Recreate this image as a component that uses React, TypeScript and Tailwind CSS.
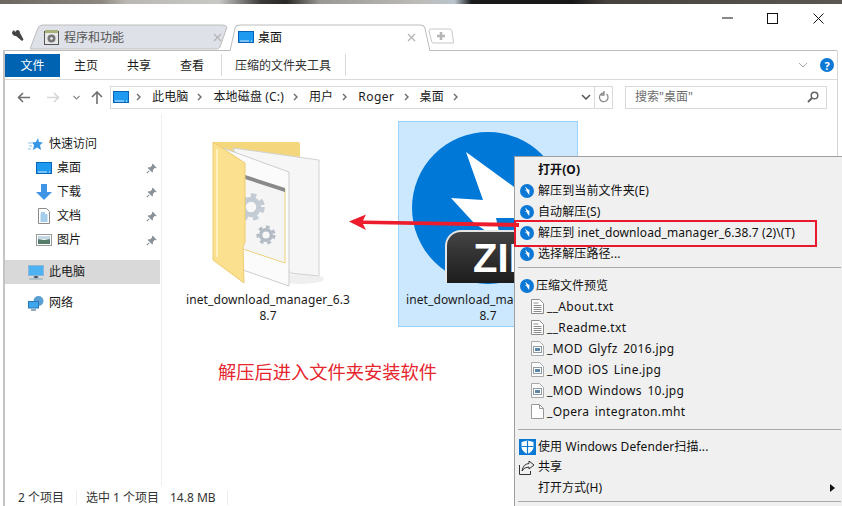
import type { FC, ReactNode } from 'react';

const Chevron: FC = () => (
  <svg width="6" height="8" viewBox="0 0 6 8" className="shrink-0">
    <path d="M1 1l3 3-3 3" fill="none" stroke="#6d6d6d" strokeWidth="1.4" />
  </svg>
);

const DesktopIcon: FC<{ w?: number; h?: number }> = ({ w = 16, h = 12 }) => (
  <svg width={w} height={h} viewBox="0 0 16 12" className="shrink-0">
    <rect x="0.5" y="0.5" width="15" height="11" fill="#1e9bf0" stroke="#0b63b8" />
    <path d="M2 10h9" stroke="#cfe9ff" strokeWidth="1" />
    <path d="M13 10h1" stroke="#ffffff" strokeWidth="1" />
  </svg>
);

const Pin: FC = () => (
  <svg width="11" height="11" viewBox="0 0 11 11" className="shrink-0">
    <path d="M6.5 0.500l4 4-1 .8-.8-.2-1.800 1.800.1 1.800-.8.8-4.500-4.500.8-.8 1.800.1 1.800-1.800-.2-.8z" fill="#8a9199" />
    <path d="M3.200 7.800L.8 10.200" stroke="#8a9199" strokeWidth="1.200" />
  </svg>
);

const ZipBadge: FC = () => (
  <svg width="14" height="14" viewBox="0 0 14 14" className="shrink-0">
    <circle cx="7" cy="7" r="7" fill="#0b78d6" />
    <path d="M5 2.500l3.500 3.200 1 -.2-.3 5.500-2.700-3.700 1-.3L4.500 6.500l2 -.4z" fill="#fff" />
  </svg>
);

const TextFileIcon: FC = () => (
  <svg width="13" height="15" viewBox="0 0 13 15" className="shrink-0">
    <path d="M.5.5h8l4 4v10H.5z" fill="#fff" stroke="#8c8c8c" />
    <path d="M2.500 4h5M2.500 6.500h8M2.500 8.500h8M2.500 10.500h8M2.500 12.500h8" stroke="#8c8c8c" />
  </svg>
);

const ImageFileIcon: FC = () => (
  <svg width="13" height="15" viewBox="0 0 13 15" className="shrink-0">
    <path d="M.5.5h8l4 4v10H.5z" fill="#fbfbfb" stroke="#a9a9a9" />
    <rect x="2.500" y="5.500" width="8" height="6" fill="#fff" stroke="#8f9aa3" />
    <rect x="4" y="7" width="5" height="3" fill="#5c87a8" />
  </svg>
);

const BlankFileIcon: FC = () => (
  <svg width="13" height="15" viewBox="0 0 13 15" className="shrink-0">
    <path d="M.5.5h8l4 4v10H.5z" fill="#fff" stroke="#9a9a9a" />
    <path d="M8.500.5v4h4" fill="none" stroke="#9a9a9a" />
  </svg>
);

const NavRow: FC<{ icon: ReactNode; label: string; pinned?: boolean; active?: boolean; indent?: boolean }> = ({
  icon,
  label,
  pinned,
  active,
  indent,
}) => (
  <div
    className={
      active
        ? 'flex h-[24px] w-[155px] items-center bg-[#d9d9d9] pl-[23px] text-[#1a1a1a]'
        : indent
          ? 'flex h-[24px] w-[155px] items-center pl-[31px] pr-[3px] text-[#1a1a1a]'
          : 'flex h-[24px] w-[155px] items-center pl-[23px] text-[#1a1a1a]'
    }
  >
    <span className="flex w-[21px] shrink-0 items-center">{icon}</span>
    <span className="flex-1">{label}</span>
    {pinned && <Pin />}
  </div>
);

const MenuRow: FC<{ icon?: ReactNode; children: ReactNode; bold?: boolean }> = ({ icon, children, bold }) => (
  <div className={`flex h-[21px] items-center pl-[5px] tracking-[0.1px] ${bold ? 'font-bold' : ''}`}>
    <span className="flex w-[18px] shrink-0 items-center">{icon}</span>
    <span className="whitespace-pre">{children}</span>
  </div>
);

const FileRow: FC<{ icon: ReactNode; children: ReactNode }> = ({ icon, children }) => (
  <div className="flex h-[21px] items-center pl-[16px] tracking-[0.35px] [word-spacing:2px]">
    <span className="flex w-[16px] shrink-0 items-center">{icon}</span>
    <span className="whitespace-pre">{children}</span>
  </div>
);

const Gear: FC<{ cx: number; cy: number; r: number; fill: string }> = ({ cx, cy, r, fill }) => (
  <g>
    <circle cx={cx} cy={cy} r={r * 0.78} fill={fill} />
    <circle cx={cx} cy={cy} r={r * 0.9} fill="none" stroke={fill} strokeWidth={r * 0.32} strokeDasharray={`${r * 0.42} ${r * 0.42}`} />
    <circle cx={cx} cy={cy} r={r * 0.4} fill="#f8f8f8" />
  </g>
);

const FolderIcon: FC = () => (
  <svg width="112" height="150" viewBox="0 0 112 150">
    <ellipse cx="88" cy="139" rx="24" ry="5" fill="#efefef" />
    <path d="M1 2h85q2 0 2 2v16H1z" fill="#f4d67c" />
    <path d="M21 8l86 12v116l-29-3z" fill="#f6f6f6" stroke="#d2d2d2" />
    <path d="M11 8l66 24v114L31 130z" fill="#fbfbfb" stroke="#cdcdcd" />
    <path d="M33 36l40 13v74L31 109z" fill="#f5f5f5" />
    <path d="M73 49v74l-42-14" fill="none" stroke="#ecd37f" />
    <path d="M33 35l40 13v4L33 39z" fill="#8a8a8a" />
    <Gear cx={39} cy={67} r={13} fill="#c3ccd4" />
    <Gear cx={54} cy={95} r={9} fill="#b3bcc4" />
    <path d="M1 2l32 21v79l-2 5 1 36-31-23z" fill="#fbe08f" stroke="#eccb73" />
    <path d="M5 9v108" stroke="#fff0bd" strokeWidth="2" />
  </svg>
);

const Tab: FC<{ active?: boolean; icon: ReactNode; label: string }> = ({ active, icon, label }) => (
  <div
    className={
      active
        ? 'relative z-10 flex h-[27px] w-[202px] shrink-0 items-center self-start pb-[1px] pl-[9px] pr-[15px] text-[#111]'
        : 'relative flex h-[26px] w-[199px] shrink-0 items-center pl-[14px] pr-[7px] text-[#555]'
    }
  >
    <svg className="absolute inset-0 h-full w-full" viewBox="0 0 200 26" preserveAspectRatio="none">
      {active ? (
        <path d="M0 26h1L6 4q1-3 5-3h178q4 0 5 3l5 22h1" fill="#fff" stroke="#bdbdbd" />
      ) : (
        <path d="M0 25L8 4q1-3 5-3h180q4 0 5 2l-7 20q-1 2-4 2z" fill="#dee1e7" stroke="#bdbdbd" />
      )}
    </svg>
    <span className="relative flex w-[20px] shrink-0 items-center">{icon}</span>
    <span className="relative mt-[2px] flex-1">{label}</span>
    <svg width="9" height="9" viewBox="0 0 9 9" className="relative shrink-0">
      <path d="M1 1l7 7M8 1L1 8" stroke="#b5b5b5" strokeWidth="1.300" />
    </svg>
  </div>
);

export default function App() {
  return (
    <div className="relative h-[506px] w-[842px] overflow-hidden bg-white font-['Noto_Sans','Noto_Sans_CJK_SC',sans-serif] text-[12px] leading-none text-[#1a1a1a]">
      <div className="h-[4px] bg-[linear-gradient(90deg,#6b6660_0%,#8c8780_12%,#b9b7b2_15%,#c8c8c6_26%,#3c3a38_31%,#2a2826_34%,#9a9894_38%,#bdbcb9_50%,#b8c4cc_54%,#1a1a1a_56%,#181818_68%,#45413d_72%,#5b5752_100%)]" />

      {/* title bar */}
      <div className="flex h-[20px] items-end justify-end">
        <svg width="11" height="2" viewBox="0 0 11 2" className="mb-[5px] mr-[34px]">
          <path d="M0 1h11" stroke="#111" strokeWidth="1" />
        </svg>
        <svg width="11" height="11" viewBox="0 0 11 11" className="mr-[35px]">
          <rect x="0.500" y="0.500" width="10" height="10" fill="none" stroke="#111" />
        </svg>
        <svg width="11" height="11" viewBox="0 0 11 11" className="mr-[18px]">
          <path d="M.5.5l10 10M10.500.5l-10 10" stroke="#111" />
        </svg>
      </div>

      {/* tabs */}
      <div className="flex h-[26px] items-center pl-[11px]">
        <svg width="13" height="13" viewBox="0 0 13 13" className="mb-[4px] mr-[6px] shrink-0">
          <path d="M1 3l2-2 1 2 2-2q3 0 3 3l3.500 6.500-1.500 1.500L5 7Q1 7 1 3z" fill="#444" />
        </svg>
        <Tab
          label="程序和功能"
          icon={
            <svg width="15" height="16" viewBox="0 0 15 16">
              <rect x="0.500" y="2.500" width="14" height="13" fill="#e8e8e8" stroke="#555" />
              <path d="M1 1h13v3H1z" fill="#a9b07a" />
              <circle cx="7.500" cy="9.500" r="4" fill="#777" />
              <circle cx="7.500" cy="9.500" r="1.200" fill="#fff" />
            </svg>
          }
        />
        <Tab active label="桌面" icon={<DesktopIcon />} />
        <svg width="26" height="16" viewBox="0 0 26 16" className="mb-[2px] ml-[-3px] shrink-0">
          <path d="M1 3q0-2 2-2h19q1 0 2 2l1.500 12H5q-1 0-1.500-2z" fill="#fff" stroke="#c8c8c8" />
          <path d="M13 4v8M9 8h8" stroke="#b5b5b5" strokeWidth="2.500" />
        </svg>
      </div>

      {/* explorer window */}
      <div className="ml-[3px] mr-[4px] flex h-[456px] flex-col rounded-tr-[2px] border-l-2 border-r border-t border-l-[#c4c4c4] border-r-[#d5d5d5] border-t-[#bdbdbd]">
        {/* ribbon */}
        <div className="flex h-[29px] shrink-0 items-center border-b border-[#dadada]">
          <div className="flex h-[23px] w-[55px] items-center justify-center bg-[#0063b1] pt-[1px] text-white">文件</div>
          <div className="ml-[14px] mt-[2px] w-[53px]">主页</div>
          <div className="mt-[2px] w-[53px]">共享</div>
          <div className="mt-[2px] w-[41px]">查看</div>
          <div className="h-[22px] w-px bg-[#dadada]" />
          <div className="ml-[13px] mt-[2px] w-[110px] text-[#333]">压缩的文件夹工具</div>
          <div className="h-[22px] w-px bg-[#dadada]" />
          <svg width="10" height="6" viewBox="0 0 10 6" className="ml-auto mr-[12px]">
            <path d="M1 1l4 4 4-4" fill="none" stroke="#a9a9a9" />
          </svg>
          <div className="mr-[3px] flex h-[14px] w-[14px] items-center justify-center rounded-full bg-[#0b78d6] text-[11px] font-bold text-white">
            ?
          </div>
        </div>

        {/* address row */}
        <div className="flex h-[34px] shrink-0 items-center pl-[12px]">
          <svg width="13" height="11" viewBox="0 0 13 11" className="shrink-0">
            <path d="M6 1L1.500 5.500 6 10M2 5.500h11" fill="none" stroke="#6f6f6f" strokeWidth="1.600" />
          </svg>
          <svg width="13" height="11" viewBox="0 0 13 11" className="ml-[17px] shrink-0">
            <path d="M7 1l4.500 4.500L7 10M11 5.500H0" fill="none" stroke="#d6d6d6" strokeWidth="1.600" />
          </svg>
          <svg width="7" height="5" viewBox="0 0 7 5" className="ml-[13px] shrink-0">
            <path d="M.5 1l3 3 3-3" fill="none" stroke="#8a8a8a" strokeWidth="1.200" />
          </svg>
          <svg width="12" height="13" viewBox="0 0 12 13" className="ml-[11px] shrink-0">
            <path d="M1 6l5-5 5 5M6 1.500V13" fill="none" stroke="#6f6f6f" strokeWidth="1.600" />
          </svg>
          <div className="ml-[7px] flex h-[23px] w-[503px] shrink-0 items-center border border-[#d9d9d9] pl-[2px] tracking-[0.15px]">
            <DesktopIcon />
            <span className="ml-[7px]"><Chevron /></span>
            <span className="ml-[10px]">此电脑</span>
            <span className="ml-[9px]"><Chevron /></span>
            <span className="ml-[10px]">本地磁盘 (C:)</span>
            <span className="ml-[9px]"><Chevron /></span>
            <span className="ml-[10px]">用户</span>
            <span className="ml-[9px]"><Chevron /></span>
            <span className="ml-[10px] tracking-[0.5px]">Roger</span>
            <span className="ml-[9px]"><Chevron /></span>
            <span className="ml-[10px]">桌面</span>
            <span className="ml-[9px]"><Chevron /></span>
            <svg width="10" height="6" viewBox="0 0 10 6" className="ml-auto mr-[3px]">
              <path d="M1 1l4 4 4-4" fill="none" stroke="#555" strokeWidth="1.500" />
            </svg>
            <div className="flex h-full w-[18px] items-center justify-center border-l border-[#d9d9d9]">
              <svg width="11" height="12" viewBox="0 0 11 12">
                <path d="M8.500 3a4.300 4.300 0 1 1-2.500-1M6 0v4h-3" fill="none" stroke="#8a8a8a" strokeWidth="1.300" />
              </svg>
            </div>
          </div>
          <div className="ml-[12px] flex h-[23px] w-[202px] shrink-0 items-center justify-between border border-[#d9d9d9] pl-[9px] pr-[7px] text-[#6d6d6d]">
            <span>搜索"桌面"</span>
            <svg width="12" height="12" viewBox="0 0 12 12">
              <circle cx="7.500" cy="4.500" r="3.300" fill="none" stroke="#666" strokeWidth="1.500" />
              <path d="M5 7l-4 4" stroke="#666" strokeWidth="2" />
            </svg>
          </div>
        </div>

        {/* content */}
        <div className="flex min-h-0 flex-1">
          <div className="flex w-[157px] shrink-0 flex-col border-r border-[#eeeeee] pt-[18px]">
            <NavRow
              label="快速访问"
              icon={
                <svg width="15" height="13" viewBox="0 0 15 13">
                  <path d="M10 0l1 4 4 .5-3 2.500 1 5-4-2.500-4 2.500 1-5-2-2.500 4-.5z" fill="#3596e6" />
                  <path d="M0 5h4M1 8h3M0 11h3" stroke="#8cc4ef" />
                </svg>
              }
            />
            <NavRow indent pinned label="桌面" icon={<DesktopIcon />} />
            <NavRow
              indent
              pinned
              label="下载"
              icon={
                <svg width="16" height="16" viewBox="0 0 16 16">
                  <path d="M5 0h6v8h5l-8 8-8-8h5z" fill="#3f94e4" />
                </svg>
              }
            />
            <NavRow
              indent
              pinned
              label="文档"
              icon={
                <svg width="16" height="16" viewBox="0 0 16 16">
                  <path d="M2.500.5h8l3 3v12h-11z" fill="#fff" stroke="#8c8c8c" />
                  <path d="M5 5h4M4.500 7h7M4.500 9h7M4.500 11h7M4.500 13h7" stroke="#4a9bd8" />
                </svg>
              }
            />
            <NavRow
              indent
              pinned
              label="图片"
              icon={
                <svg width="16" height="12" viewBox="0 0 16 12">
                  <rect x="0.500" y="0.500" width="15" height="11" fill="#fff" stroke="#9a9a9a" />
                  <path d="M2 2h12v3H2z" fill="#c3d8e4" />
                  <path d="M2 5l6 1 6-1v5H2z" fill="#557d6a" />
                </svg>
              }
            />
            <div className="h-[8px]" />
            <NavRow
              active
              label="此电脑"
              icon={
                <svg width="16" height="15" viewBox="0 0 16 15">
                  <rect x="0.500" y="0.500" width="15" height="10" fill="#4db2f2" stroke="#8fb8d8" />
                  <path d="M6 11h4v2H6zM1 14h14" stroke="#8fa9bd" />
                </svg>
              }
            />
            <div className="h-[7px]" />
            <NavRow
              label="网络"
              icon={
                <svg width="16" height="15" viewBox="0 0 16 15">
                  <circle cx="10.500" cy="5" r="5" fill="#5a9fd4" />
                  <rect x="0.500" y="5.500" width="10" height="6.500" fill="#3ea6ec" stroke="#2a78b8" />
                  <path d="M3 14h5" stroke="#6d8ea8" strokeWidth="1.500" />
                </svg>
              }
            />
          </div>

          <div className="flex flex-1 items-start pl-[16px] pt-[7px]">
            <div className="flex w-[180px] shrink-0 flex-col items-center pt-[19px] text-center tracking-[0.1px]">
              <FolderIcon />
              <span className="mt-[2px] break-all leading-[16px]">inet_download_manager_6.3<br />8.7</span>
            </div>
            <div className="relative ml-[40px] h-[206px] w-[180px] shrink-0 overflow-hidden border border-[#99d1ff] bg-[#cce8ff] tracking-[0.1px]">
              <svg width="178" height="165" viewBox="0 0 178 165" className="absolute left-0 top-0">
                <circle cx="89" cy="86" r="76" fill="#0078d7" />
                <path d="M67 30l55 40v26H97l5 23-27-18-23-25 32 2z" fill="#fff" />
              </svg>
              <div className="absolute left-[46px] top-[108px] flex h-[53px] w-[130px] items-center rounded-tl-[16px] border-l-2 border-t-2 border-[#e6e6e6] bg-[linear-gradient(180deg,#444444,#1c1c1c)] pl-[26px] font-['Liberation_Sans',sans-serif] text-[40px] font-bold text-white">
                ZIP
              </div>
              <div className="absolute inset-x-0 top-[170px] text-center leading-[16px]">
                <div className="whitespace-nowrap">inet_download_manager_6.3</div>
                <div>8.7</div>
              </div>
            </div>
          </div>
        </div>

        {/* status bar */}
        <div className="flex h-[20px] shrink-0 items-center pl-[13px] pt-[3px] text-[#333]">
          <span className="w-[58px]">2 个项目</span>
          <div className="h-[14px] w-px bg-[#ececec]" />
          <span className="ml-[9px] w-[84px]">选中 1 个项目</span>
          <span className="w-[57px]">14.8 MB</span>
          <div className="h-[14px] w-px bg-[#ececec]" />
        </div>
      </div>

      {/* context menu */}
      <div className="absolute left-[514px] top-[156px] h-[350px] w-[328px] border-l border-t border-[#a0a0a0] bg-[#f0f0f0] pt-[2px] text-[#111]">
        <MenuRow bold>打开(O)</MenuRow>
        <MenuRow icon={<ZipBadge />}>解压到当前文件夹(E)</MenuRow>
        <MenuRow icon={<ZipBadge />}>自动解压(S)</MenuRow>
        <MenuRow icon={<ZipBadge />}>解压到 inet_download_manager_6.38.7 (2)\(T)</MenuRow>
        <MenuRow icon={<ZipBadge />}>选择解压路径...</MenuRow>
        <div className="ml-[3px] mr-[1px] mt-[3px] h-px bg-[#a8a8a8]" />
        <div className="mt-[7px] flex h-[21px] items-center pl-[5px]">
          <span className="flex w-[16px] shrink-0 items-center"><ZipBadge /></span>
          <span>压缩文件预览</span>
        </div>
        <FileRow icon={<TextFileIcon />}>__About.txt</FileRow>
        <FileRow icon={<TextFileIcon />}>__Readme.txt</FileRow>
        <FileRow icon={<ImageFileIcon />}>_MOD Glyfz 2016.jpg</FileRow>
        <FileRow icon={<ImageFileIcon />}>_MOD iOS Line.jpg</FileRow>
        <FileRow icon={<ImageFileIcon />}>_MOD Windows 10.jpg</FileRow>
        <FileRow icon={<BlankFileIcon />}>_Opera integraton.mht</FileRow>
        <div className="ml-[3px] mr-[1px] mt-[7px] h-px bg-[#a8a8a8]" />
        <div className="mt-[6px] flex h-[21px] items-center pl-[4px] tracking-[0.1px]">
          <span className="flex w-[19px] shrink-0 items-center">
            <svg width="17" height="16" viewBox="0 0 17 16">
              <path d="M0 0h17v16H0z" fill="#0b78d6" />
              <path d="M8.500 1.500l6 1.500v5q0 4-6 7-6-3-6-7V3z" fill="#fff" />
              <path d="M8.500 1.500V15M2.500 7.500h12" stroke="#0b78d6" strokeWidth="1.200" />
            </svg>
          </span>
          <span>使用 Windows Defender扫描...</span>
        </div>
        <div className="flex h-[20px] items-center pl-[4px]">
          <span className="flex w-[19px] shrink-0 items-center">
            <svg width="16" height="15" viewBox="0 0 16 15">
              <path d="M10 1l5 4-5 4V7Q5 7 3 11 4 4 10 3.500z" fill="#f0f0f0" stroke="#333" />
              <path d="M.5 5v9.500h11V11" fill="none" stroke="#333" />
            </svg>
          </span>
          <span>共享</span>
        </div>
        <div className="flex h-[21px] items-center pl-[23px] pr-[7px]">
          <span className="flex-1">打开方式(H)</span>
          <svg width="5" height="8" viewBox="0 0 5 8">
            <path d="M0 0l5 4-5 4z" fill="#111" />
          </svg>
        </div>
        <div className="ml-[3px] mr-[1px] mt-[3px] h-px bg-[#a8a8a8]" />
      </div>

      {/* annotations */}
      <div className="absolute left-[514px] top-[220px] h-[27px] w-[303px] border-2 border-[#e8192c]" />
      <svg width="175" height="20" viewBox="0 0 175 20" className="absolute left-[345px] top-[212px]">
        <path d="M4 9.500l17-7-3 6 156 2.500v4L18 12l3 6z" fill="#ec1c2d" />
      </svg>
      <div className="absolute left-[218px] top-[362px] text-[18.250px] leading-[20px] text-[#e6262e]">解压后进入文件夹安装软件</div>
    </div>
  );
}
